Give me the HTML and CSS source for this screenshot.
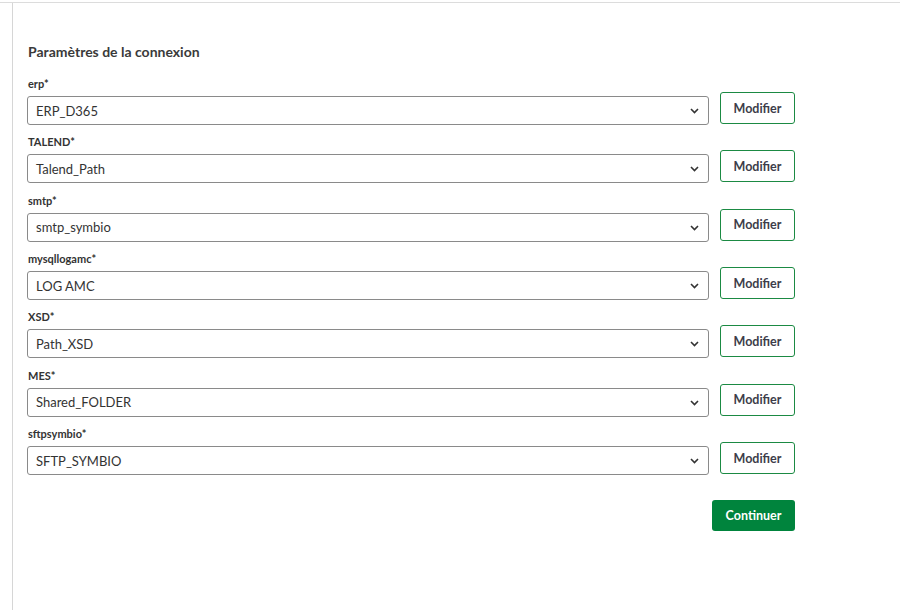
FILE: index.html
```html
<!DOCTYPE html>
<html lang="fr">
<head>
<meta charset="utf-8">
<title>Paramètres de la connexion</title>
<link rel="stylesheet" href="styles.css">
</head>
<body>
<div class="topbar"></div>
<main class="panel">
  <form class="form">
    <h2 class="title">Paramètres de la connexion</h2>

    <div class="row">
      <div class="field">
        <label class="label">erp*</label>
        <div class="select"><span>ERP_D365</span><svg class="chev" width="9" height="6" viewBox="0 0 9 6"><path d="M1 1 L4.5 4.5 L8 1" fill="none" stroke="#333" stroke-width="1.6"/></svg></div>
      </div>
      <button type="button" class="btn-outline">Modifier</button>
    </div>

    <div class="row">
      <div class="field">
        <label class="label">TALEND*</label>
        <div class="select"><span>Talend_Path</span><svg class="chev" width="9" height="6" viewBox="0 0 9 6"><path d="M1 1 L4.5 4.5 L8 1" fill="none" stroke="#333" stroke-width="1.6"/></svg></div>
      </div>
      <button type="button" class="btn-outline">Modifier</button>
    </div>

    <div class="row">
      <div class="field">
        <label class="label">smtp*</label>
        <div class="select"><span>smtp_symbio</span><svg class="chev" width="9" height="6" viewBox="0 0 9 6"><path d="M1 1 L4.5 4.5 L8 1" fill="none" stroke="#333" stroke-width="1.6"/></svg></div>
      </div>
      <button type="button" class="btn-outline">Modifier</button>
    </div>

    <div class="row">
      <div class="field">
        <label class="label">mysqllogamc*</label>
        <div class="select"><span>LOG AMC</span><svg class="chev" width="9" height="6" viewBox="0 0 9 6"><path d="M1 1 L4.5 4.5 L8 1" fill="none" stroke="#333" stroke-width="1.6"/></svg></div>
      </div>
      <button type="button" class="btn-outline">Modifier</button>
    </div>

    <div class="row">
      <div class="field">
        <label class="label">XSD*</label>
        <div class="select"><span>Path_XSD</span><svg class="chev" width="9" height="6" viewBox="0 0 9 6"><path d="M1 1 L4.5 4.5 L8 1" fill="none" stroke="#333" stroke-width="1.6"/></svg></div>
      </div>
      <button type="button" class="btn-outline">Modifier</button>
    </div>

    <div class="row">
      <div class="field">
        <label class="label">MES*</label>
        <div class="select"><span>Shared_FOLDER</span><svg class="chev" width="9" height="6" viewBox="0 0 9 6"><path d="M1 1 L4.5 4.5 L8 1" fill="none" stroke="#333" stroke-width="1.6"/></svg></div>
      </div>
      <button type="button" class="btn-outline">Modifier</button>
    </div>

    <div class="row">
      <div class="field">
        <label class="label">sftpsymbio*</label>
        <div class="select"><span>SFTP_SYMBIO</span><svg class="chev" width="9" height="6" viewBox="0 0 9 6"><path d="M1 1 L4.5 4.5 L8 1" fill="none" stroke="#333" stroke-width="1.6"/></svg></div>
      </div>
      <button type="button" class="btn-outline">Modifier</button>
    </div>

    <div class="actions">
      <button type="button" class="btn-primary">Continuer</button>
    </div>
  </form>
</main>
</body>
</html>
```
FILE: styles.css
```css
* { box-sizing: border-box; }
html, body { margin: 0; padding: 0; background: #fff; }
body {
  font-family: Lato, "Liberation Sans", sans-serif;
  color: #333;
  height: 611px;
  overflow: hidden;
}
.topbar {
  height: 3px;
  border-bottom: 1px solid #dcdcdc;
}
.panel {
  margin-left: 12px;
  border-left: 1px solid #d6d6d6;
  height: 607px;
  padding: 39px 0 0 14px;
}
.form {
  width: 768px;
}
.title {
  margin: 0 0 14px 1px;
  font-size: 14px;
  line-height: 20px;
  font-weight: 700;
  color: #3a3a3a;
}
.row {
  display: flex;
  align-items: flex-end;
  gap: 11px;
  margin-bottom: 9.35px;
}
.field {
  flex: 1;
  display: flex;
  flex-direction: column;
}
.label {
  font-size: 11px;
  line-height: 16px;
  font-weight: 700;
  color: #333;
  margin: 0 0 4px 1px;
}
.select {
  height: 29px;
  border: 1px solid #8a8a8a;
  border-radius: 3px;
  display: flex;
  align-items: center;
  justify-content: space-between;
  padding: 0 9px 0 8px;
  font-size: 13px;
  color: #333;
}
.chev { display: block; margin-top: 1px; }
.btn-outline {
  width: 75px;
  height: 32px;
  margin-bottom: 1px;
  background: #fff;
  border: 1px solid #1b8a43;
  border-radius: 3px;
  font-family: inherit;
  font-size: 12.5px;
  font-weight: 700;
  color: #3d3d4a;
  padding: 0;
}
.actions {
  display: flex;
  justify-content: flex-end;
  margin-top: 25px;
}
.btn-primary {
  width: 83px;
  height: 31px;
  background: #00843d;
  border: none;
  border-radius: 3px;
  color: #fff;
  font-family: inherit;
  font-size: 12.5px;
  font-weight: 700;
  padding: 0;
}
```
